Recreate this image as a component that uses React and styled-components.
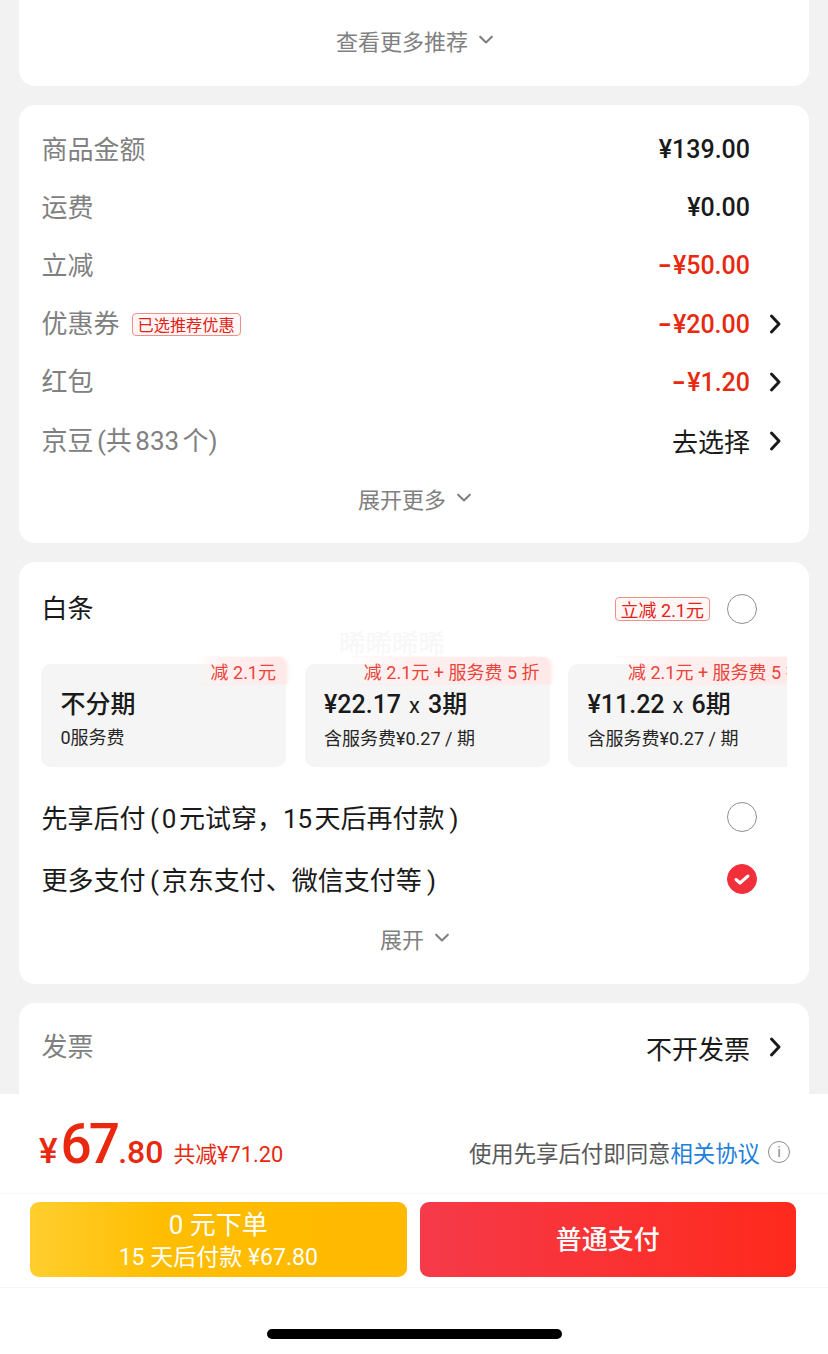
import React from "react";
import styled, { createGlobalStyle } from "styled-components";

const Global = createGlobalStyle`
  html, body { margin: 0; padding: 0; background: #f2f2f2; }
  body { font-family: Roboto, "Noto Sans CJK SC", sans-serif; color: #1a1a1a; }
  * { box-sizing: border-box; }
`;

const Page = styled.div`
  width: 828px; height: 1354px; display: flex; flex-direction: column; overflow: hidden; background: #f2f2f2;
`;
const Scroll = styled.div`
  height: 1094px; overflow: hidden; padding: 0 19px; display: flex; flex-direction: column; gap: 19px; flex: none;
`;
const Card = styled.section`
  position: relative; background: #fff; border-radius: 16px; flex: none; height: ${p => p.$h}px; padding: ${p => p.$pad || "0"};
  ${p => p.$flat ? "border-radius: 0 0 16px 16px;" : ""}
`;
const MoreRow = styled.div`
  display: flex; align-items: center; justify-content: center; gap: 8px; padding-left: 4px;
  color: #808080; font-size: 22px; height: 40px; margin-top: ${p => p.$mt || 0}px;
`;
const Rows = styled.div` display: flex; flex-direction: column; `;
const Row = styled.div`
  height: 58.2px; display: flex; align-items: center; padding-left: 22.5px; font-size: 26px;
`;
const Label = styled.span`
  color: ${p => p.$dark ? "#1a1a1a" : "#808080"}; line-height: 1; word-spacing: -3px; white-space: nowrap;
`;
const Tag = styled.span`
  margin-left: 12px; font-size: 16.2px; height: 23px; padding: 0 5px; color: #e2231a; border: 1px solid #f0908a;
  border-radius: 4px; display: inline-flex; align-items: center; background: #fff6f5; white-space: nowrap;
`;
const Value = styled.span`
  margin-left: auto; font-size: ${p => p.$plain ? 26 : 25}px; color: ${p => p.$red ? "#e8290f" : "#1a1a1a"};
  font-weight: ${p => p.$plain ? 400 : 500}; white-space: nowrap;
`;
const Minus = styled.span`
  display: inline-block; transform: scaleX(1.5); margin: 0 3px 0 2px; font-weight: 700;
`;
const ArrowSlot = styled.span`
  width: 59px; padding-left: 13px; flex: none; display: flex; align-items: center;
`;
const PayHead = styled.div`
  height: 94px; display: flex; align-items: center; padding: 0 52px 0 22.5px; font-size: 26px;
`;
const SmallTag = styled(Tag)`
  margin-left: auto; margin-right: 17px; font-size: 18px; height: 24px; padding: 0 5px;
`;
const Watermark = styled.div`
  position: absolute; left: 319px; top: 66px; width: 108px; text-align: center; font-size: 26.5px; line-height: 32px;
  color: #f7f7f7; white-space: nowrap;
`;
const Plans = styled.div`
  margin: 0 0 19px 22px; width: 746px; display: flex; gap: 18.5px; overflow: hidden; padding-top: 8px;
`;
const Plan = styled.div`
  position: relative; width: 245px; height: 103px; flex: none; background: #f5f5f5; border-radius: 10px; padding: 26px 19.5px 0;
`;
const Flag = styled.div`
  position: absolute; top: -7px; right: 0; height: 27px; padding: 0 10px 0 14px;
  background: linear-gradient(270deg, #ffe8e8, #fff0f0 70%, rgba(255,240,240,0));
  box-shadow: 2px 0 3px rgba(255,228,228,0.7);
  display: flex; align-items: center;
  color: #e9453a; font-size: 18px; white-space: nowrap; border-radius: 0 8px 0 8px;
  ${p => p.$clip ? "right: auto; left: 46px;" : ""}
`;
const PlanTitle = styled.div` font-size: 25px; font-weight: 500; line-height: 30px; white-space: nowrap; `;
const Times = styled.span` font-weight: 400; font-size: 22px; margin: 0 8px; `;
const PlanSub = styled.div` font-size: 18px; line-height: 24px; margin-top: 6px; white-space: nowrap; color: #262626; `;
const OptionRow = styled.div`
  height: 62px; display: flex; align-items: center; justify-content: space-between; padding: 0 52px 0 22.5px; font-size: 26px;
  white-space: nowrap;
`;
const OptionText = styled.span` margin-top: -2px; word-spacing: -4px; `;
const OpenParen = styled.span` margin: 0 3px 0 2px; `;
const CloseParen = styled.span` margin-left: 5px; `;
const Radio = styled.span`
  width: 30px; height: 30px; border-radius: 50%; border: 1px solid #8f8f8f; flex: none; display: flex; align-items: center; justify-content: center;
  ${p => p.$on ? "background: #f2303c; border-color: #f2303c;" : ""}
`;
const Footer = styled.footer`
  height: 260px; flex: none; background: #fff; display: flex; flex-direction: column;
`;
const Summary = styled.div`
  height: 100px; display: flex; align-items: center; padding: 0 38px 0 39px; border-bottom: 1px solid #f7f7f7;
`;
const Price = styled.div` display: flex; align-items: baseline; color: #e8290f; font-weight: 500; white-space: nowrap; `;
const Yen = styled.span` font-size: 35px; margin-right: 3px; `;
const Big = styled.span` font-size: 55px; letter-spacing: -3px; margin-right: 1px; `;
const Cents = styled.span` font-size: 32px; `;
const Saved = styled.span` font-size: 21.8px; margin-left: 10px; font-weight: 400; position: relative; top: -1px; `;
const Agree = styled.div` margin-left: auto; margin-top: 17px; display: flex; align-items: center; font-size: 22.4px; color: #595959; white-space: nowrap; `;
const Link = styled.span` color: #1f7fdc; `;
const InfoIcon = styled.span`
  width: 22px; height: 22px; border-radius: 50%; border: 1px solid #8c8c8c; color: #8c8c8c; font-size: 15px; margin-left: 8px;
  display: flex; align-items: center; justify-content: center;
`;
const Actions = styled.div`
  height: 94px; display: flex; gap: 13px; padding: 8px 32px 10px 30px; border-bottom: 1px solid #f7f7f7;
`;
const PayBtn = styled.div`
  flex: 1; border-radius: 9px; color: #fff; display: flex; flex-direction: column; align-items: center; justify-content: center;
  background: ${p => p.$bg}; font-size: 26px; font-weight: ${p => p.$light ? 400 : 500}; line-height: 32px;
  padding-top: ${p => p.$light ? 4 : 0}px;
`;
const PaySub = styled.span` font-size: 23px; font-weight: 400; line-height: 32px; margin-top: 1px; `;
const HomeZone = styled.div` flex: 1; display: flex; justify-content: center; align-items: flex-start; padding-top: 41px; `;
const HomeBar = styled.div` width: 295px; height: 10px; border-radius: 5px; background: #000; `;

const Chevron = ({ size = 24, dir = "right", color = "#1a1a1a", w = 3 }) => (
  <svg width={size} height={size} viewBox="0 0 24 24" fill="none" stroke={color} strokeWidth={w} strokeLinecap="round" strokeLinejoin="round">
    {dir === "right" ? <path d="M8.5 4l7.5 8-7.5 8" /> : <path d="M5 8l7 7 7-7" />}
  </svg>
);
const Arrow = () => <ArrowSlot><Chevron /></ArrowSlot>;
const Down = () => <Chevron size={20} dir="down" color="#808080" w={2.5} />;

export default function App() {
  return (
    <Page>
      <Global />
      <Scroll>
        <Card $h={86} $flat $pad="20px 0 0">
          <MoreRow>查看更多推荐<Down /></MoreRow>
        </Card>
        <Card $h={438} $pad="15.5px 0 0">
          <Rows>
            <Row><Label>商品金额</Label><Value>¥139.00</Value><ArrowSlot /></Row>
            <Row><Label>运费</Label><Value>¥0.00</Value><ArrowSlot /></Row>
            <Row><Label>立减</Label><Value $red><Minus>-</Minus>¥50.00</Value><ArrowSlot /></Row>
            <Row><Label>优惠券</Label><Tag>已选推荐优惠</Tag><Value $red><Minus>-</Minus>¥20.00</Value><Arrow /></Row>
            <Row><Label>红包</Label><Value $red><Minus>-</Minus>¥1.20</Value><Arrow /></Row>
            <Row><Label>京豆 (共 833 个)</Label><Value $plain>去选择</Value><Arrow /></Row>
          </Rows>
          <MoreRow $mt={8}>展开更多<Down /></MoreRow>
        </Card>
        <Card $h={422}>
          <Watermark>晞晞晞晞</Watermark>
          <PayHead>
            <Label $dark>白条</Label>
            <SmallTag>立减 2.1元</SmallTag>
            <Radio />
          </PayHead>
          <Plans>
            <Plan><Flag>减 2.1元</Flag><PlanTitle>不分期</PlanTitle><PlanSub>0服务费</PlanSub></Plan>
            <Plan><Flag>减 2.1元 + 服务费 5 折</Flag><PlanTitle>¥22.17<Times>x</Times>3期</PlanTitle><PlanSub>含服务费¥0.27 / 期</PlanSub></Plan>
            <Plan><Flag $clip>减 2.1元 + 服务费 5 折</Flag><PlanTitle>¥11.22<Times>x</Times>6期</PlanTitle><PlanSub>含服务费¥0.27 / 期</PlanSub></Plan>
          </Plans>
          <OptionRow><OptionText>先享后付 <OpenParen>(</OpenParen>0 元试穿，15 天后再付款<CloseParen>)</CloseParen></OptionText><Radio /></OptionRow>
          <OptionRow><OptionText>更多支付 <OpenParen>(</OpenParen>京东支付、微信支付等<CloseParen>)</CloseParen></OptionText>
            <Radio $on>
              <svg width="20" height="20" viewBox="0 0 20 20" fill="none" stroke="#fff" strokeWidth="3" strokeLinecap="round" strokeLinejoin="round"><path d="M4 10.5l4 3.5 8-7" /></svg>
            </Radio>
          </OptionRow>
          <MoreRow $mt={8}>展开<Down /></MoreRow>
        </Card>
        <Card $h={200} $pad="15px 0 0">
          <Row><Label>发票</Label><Value $plain>不开发票</Value><Arrow /></Row>
        </Card>
      </Scroll>
      <Footer>
        <Summary>
          <Price><Yen>¥</Yen><Big>67</Big><Cents>.80</Cents><Saved>共减¥71.20</Saved></Price>
          <Agree>使用先享后付即同意<Link>相关协议</Link><InfoIcon>i</InfoIcon></Agree>
        </Summary>
        <Actions>
          <PayBtn $light $bg="linear-gradient(90deg,#ffce2e,#ffbd00 35%,#ffb900)">0 元下单<PaySub>15 天后付款 ¥67.80</PaySub></PayBtn>
          <PayBtn $bg="linear-gradient(90deg,#f53a4a,#ff2a1c)">普通支付</PayBtn>
        </Actions>
        <HomeZone><HomeBar /></HomeZone>
      </Footer>
    </Page>
  );
}
